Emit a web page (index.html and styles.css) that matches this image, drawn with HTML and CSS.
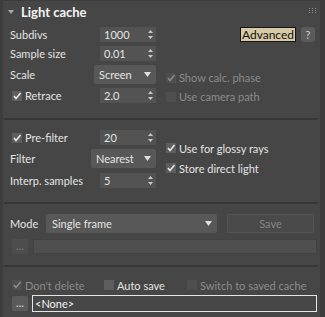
FILE: index.html
```html
<!DOCTYPE html>
<html lang="en">
<head>
    <meta charset="UTF-8">
    <title>Light cache</title>
    <link rel="stylesheet" href="styles.css">
</head>
<body>

    <div class="panel">
        <div class="rollout-head">
            <svg class="twisty" width="6" height="4" viewBox="0 0 6 4"><path d="M0 0H6L3 4Z" fill="#a8a8a8"/></svg>
            <span class="title">Light cache</span>
            <svg class="grip" width="7" height="6" viewBox="0 0 7 6">
                <rect x="0" y="0" width="1" height="1" fill="#8c8c8c"/><rect x="3" y="0" width="1" height="1" fill="#8c8c8c"/><rect x="6" y="0" width="1" height="1" fill="#8c8c8c"/>
                <rect x="0" y="2" width="1" height="1" fill="#8c8c8c"/><rect x="3" y="2" width="1" height="1" fill="#8c8c8c"/><rect x="6" y="2" width="1" height="1" fill="#8c8c8c"/>
                <rect x="0" y="4" width="1" height="1" fill="#8c8c8c"/><rect x="3" y="4" width="1" height="1" fill="#8c8c8c"/><rect x="6" y="4" width="1" height="1" fill="#8c8c8c"/>
            </svg>
        </div>

        <!-- blocco principale -->
        <div class="section sec-main">
            <div class="col-left">
                <div class="row"><span class="lbl">Subdivs</span><div class="spin">1000<svg class="arrows" width="5" height="9" viewBox="0 0 5 9"><path d="M0 3L2.5 0L5 3Z M0 6L2.5 9L5 6Z" fill="#c8c8c8"/></svg></div></div>
                <div class="row"><span class="lbl">Sample size</span><div class="spin">0.01<svg class="arrows" width="5" height="9" viewBox="0 0 5 9"><path d="M0 3L2.5 0L5 3Z M0 6L2.5 9L5 6Z" fill="#c8c8c8"/></svg></div></div>
                <div class="row"><span class="lbl">Scale</span><div class="drop drop-scale">Screen<svg class="caret" width="7" height="5" viewBox="0 0 7 5"><path d="M0 0H7L3.5 5Z" fill="#e0e0e0"/></svg></div></div>
                <div class="row"><span class="chk"><svg class="box" width="10" height="10" viewBox="0 0 10 10"><rect width="10" height="10" fill="#5e5e5e"/><path d="M2 5L4 7.5L8.5 2" stroke="#e8e8e8" stroke-width="1.6" fill="none"/></svg>Retrace</span><div class="spin">2.0<svg class="arrows" width="5" height="9" viewBox="0 0 5 9"><path d="M0 3L2.5 0L5 3Z M0 6L2.5 9L5 6Z" fill="#c8c8c8"/></svg></div></div>
            </div>
            <div class="col-right">
                <div class="btn-row">
                    <span class="btn-adv">Advanced</span>
                    <span class="btn-help">?</span>
                </div>
                <div class="opt opt-first disabled"><svg class="box" width="10" height="10" viewBox="0 0 10 10"><rect width="10" height="10" fill="#4f4f4f"/><path d="M2 5L4 7.5L8.5 2" stroke="#8a8a8a" stroke-width="1.6" fill="none"/></svg>Show calc. phase</div>
                <div class="opt disabled"><svg class="box" width="10" height="10" viewBox="0 0 10 10"><rect width="10" height="10" fill="#4f4f4f"/></svg>Use camera path</div>
            </div>
        </div>

        <div class="sep"></div>

        <!-- filtro -->
        <div class="section sec-filter">
            <div class="col-left">
                <div class="row"><span class="chk"><svg class="box" width="10" height="10" viewBox="0 0 10 10"><rect width="10" height="10" fill="#5e5e5e"/><path d="M2 5L4 7.5L8.5 2" stroke="#e8e8e8" stroke-width="1.6" fill="none"/></svg>Pre-filter</span><div class="spin">20<svg class="arrows" width="5" height="9" viewBox="0 0 5 9"><path d="M0 3L2.5 0L5 3Z M0 6L2.5 9L5 6Z" fill="#c8c8c8"/></svg></div></div>
                <div class="row"><span class="lbl">Filter</span><div class="drop drop-filter">Nearest<svg class="caret" width="7" height="5" viewBox="0 0 7 5"><path d="M0 0H7L3.5 5Z" fill="#e0e0e0"/></svg></div></div>
                <div class="row row-last"><span class="lbl">Interp. samples</span><div class="spin">5<svg class="arrows" width="5" height="9" viewBox="0 0 5 9"><path d="M0 3L2.5 0L5 3Z M0 6L2.5 9L5 6Z" fill="#c8c8c8"/></svg></div></div>
            </div>
            <div class="col-right">
                <div class="opt opt-top"><svg class="box" width="10" height="10" viewBox="0 0 10 10"><rect width="10" height="10" fill="#5e5e5e"/><path d="M2 5L4 7.5L8.5 2" stroke="#e8e8e8" stroke-width="1.6" fill="none"/></svg>Use for glossy rays</div>
                <div class="opt opt-tall"><svg class="box" width="10" height="10" viewBox="0 0 10 10"><rect width="10" height="10" fill="#5e5e5e"/><path d="M2 5L4 7.5L8.5 2" stroke="#e8e8e8" stroke-width="1.6" fill="none"/></svg>Store direct light</div>
            </div>
        </div>

        <div class="sep"></div>

        <!-- modalita -->
        <div class="mode-row">
            <span class="lbl mode-lbl">Mode</span>
            <div class="drop drop-mode">Single frame<svg class="caret" width="7" height="5" viewBox="0 0 7 5"><path d="M0 0H7L3.5 5Z" fill="#e0e0e0"/></svg></div>
            <span class="btn-save">Save</span>
        </div>
        <div class="file-row file-off">
            <span class="btn-dots">...</span>
            <div class="field"></div>
        </div>

        <div class="sep sep-bottom"></div>

        <div class="opts-row">
            <div class="opt disabled"><svg class="box" width="10" height="10" viewBox="0 0 10 10"><rect width="10" height="10" fill="#4f4f4f"/><path d="M2 5L4 7.5L8.5 2" stroke="#8a8a8a" stroke-width="1.6" fill="none"/></svg>Don't delete</div>
            <div class="opt"><svg class="box" width="10" height="10" viewBox="0 0 10 10"><rect width="10" height="10" fill="#5e5e5e"/></svg>Auto save</div>
            <div class="opt disabled"><svg class="box" width="10" height="10" viewBox="0 0 10 10"><rect width="10" height="10" fill="#4f4f4f"/></svg>Switch to saved cache</div>
        </div>
        <div class="file-row file-on">
            <span class="btn-dots">...</span>
            <div class="field">&lt;None&gt;</div>
        </div>
    </div>

</body>
</html>
```

FILE: styles.css
```css
/* Pannello scuro stile 3ds Max */
body {
    margin: 0;
    background-color: #3d3d3d;
    font-family: Lato, "Liberation Sans", sans-serif;
    font-size: 11px;
    color: #e4e4e4;
}

.panel {
    margin: 1px 5px 0 3px;
    height: 316px;
    background-color: #464646;
}

.rollout-head {
    height: 21px;
    display: flex;
    align-items: center;
    padding-left: 5px;
    padding-right: 4px;
}

.twisty {
    margin-top: 1px;
}

.title {
    margin-left: 7px;
    font-weight: bold;
    font-size: 13px;
    color: #f4f4f4;
    flex: 1;
}

.grip {
    align-self: flex-start;
    margin-top: 7px;
}

.section {
    display: flex;
}

.col-left {
    width: 146px;
    padding-left: 7px;
    display: flex;
    flex-direction: column;
    gap: 4px;
}

.col-right {
    flex: 1;
    padding-left: 7px;
    padding-right: 5px;
    display: flex;
    flex-direction: column;
}

.sec-main {
    padding-top: 5px;
    padding-bottom: 12px;
}

.sec-filter {
    padding-top: 10px;
    padding-bottom: 14px;
}

.row {
    display: flex;
    align-items: center;
    justify-content: space-between;
}

.row-last {
    margin-top: 1px;
}

.lbl {
    white-space: nowrap;
}

.chk, .opt {
    display: flex;
    align-items: center;
    white-space: nowrap;
}

.chk {
    margin-left: 2px;
}

.box {
    margin-right: 3px;
    flex: none;
}

.spin {
    width: 52px;
    height: 15px;
    padding-left: 4px;
    background-color: #535353;
    display: flex;
    align-items: center;
    justify-content: space-between;
    box-sizing: content-box;
}

.arrows {
    margin-right: 3px;
}

.drop {
    height: 19px;
    padding-left: 5px;
    background-color: #585858;
    border-radius: 2px;
    display: flex;
    align-items: center;
    justify-content: space-between;
    box-sizing: border-box;
}

.caret {
    margin-right: 5px;
}

.drop-scale {
    width: 62px;
}

.drop-filter {
    width: 65px;
}

.btn-row {
    display: flex;
    justify-content: flex-end;
    gap: 5px;
}

.btn-adv {
    height: 15px;
    width: 56px;
    box-sizing: border-box;
    background-color: #d7c8a6;
    border: 1px solid #151515;
    color: #111;
    font-size: 12px;
    line-height: 13px;
    text-align: center;
}

.btn-help {
    width: 14px;
    height: 15px;
    background-color: #5b5b5b;
    border-radius: 3px;
    text-align: center;
    line-height: 15px;
    color: #d0d0d0;
    font-size: 11px;
}

.opt {
    height: 19px;
    padding-left: 3px;
}

.opt-first {
    margin-top: 26px;
}

.opt-top {
    margin-top: 8px;
    height: 20px;
}

.opt-tall {
    height: 20px;
}

.disabled {
    color: #8b8b8b;
}

.sep {
    height: 2px;
    margin: 0 2px 0 1px;
    background-color: #373737;
}

.mode-row {
    margin-top: 10px;
    height: 19px;
    padding-left: 7px;
    display: flex;
    align-items: center;
}

.mode-lbl {
    width: 36px;
}

.drop-mode {
    width: 171px;
    padding-left: 6px;
}

.btn-save {
    margin-left: 10px;
    width: 87px;
    height: 19px;
    box-sizing: border-box;
    border: 1px solid #555;
    border-radius: 2px;
    background-color: #4a4a4a;
    color: #858585;
    text-align: center;
    line-height: 17px;
}

.file-row {
    display: flex;
    align-items: center;
    padding-left: 9px;
    padding-right: 3px;
}

.file-off {
    margin-top: 6px;
    height: 15px;
}

.btn-dots {
    width: 16px;
    height: 15px;
    border-radius: 2px;
    background-color: #4d4d4d;
    color: #7d7d7d;
    font-size: 11px;
    line-height: 13px;
    text-align: center;
}

.field {
    flex: 1;
    height: 15px;
    margin-left: 5px;
    box-sizing: border-box;
    background-color: #4f4f4f;
    border: 1px solid #424242;
}

.sep-bottom {
    margin-top: 11px;
}

.opts-row {
    margin-top: 9px;
    height: 18px;
    padding-left: 9px;
    display: grid;
    grid-template-columns: 92px 83px auto;
}

.opts-row .opt {
    padding-left: 0;
    height: 18px;
}

.file-on {
    margin-top: 1px;
    height: 17px;
}

.file-on .btn-dots {
    background-color: #5a5a5a;
    color: #e0e0e0;
}

.file-on .field {
    height: 17px;
    margin-left: 4px;
    background-color: #474747;
    border: 1px solid #e6e6e6;
    color: #f4f4f4;
    padding-left: 2px;
    line-height: 15px;
}
```
